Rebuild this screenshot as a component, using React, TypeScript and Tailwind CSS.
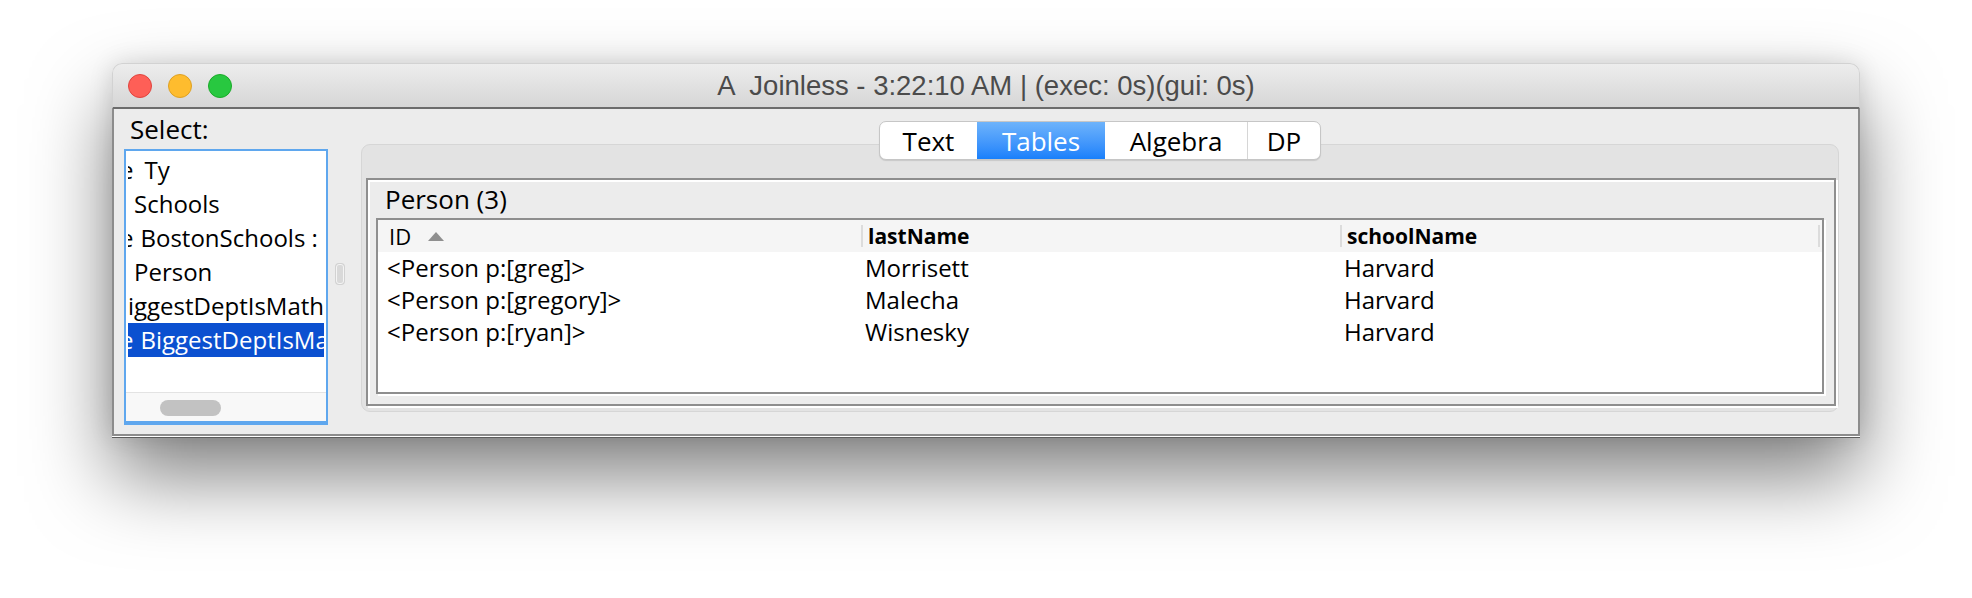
import React from 'react';

type ListRow = {
  text: string;
  prefix: boolean;
  textClass: string;
  selected?: boolean;
};

const listRows: ListRow[] = [
  { text: 'Ty', prefix: true, textClass: 'ml-[11px]' },
  { text: 'Schools', prefix: false, textClass: 'ml-[6px]' },
  { text: 'BostonSchools :', prefix: true, textClass: 'ml-[7px]' },
  { text: 'Person', prefix: false, textClass: 'ml-[6px]' },
  { text: 'iggestDeptIsMath', prefix: false, textClass: 'ml-0' },
  { text: 'BiggestDeptIsMath', prefix: true, textClass: 'ml-[7px]', selected: true },
];

const people = [
  { id: '<Person p:[greg]>', lastName: 'Morrisett', school: 'Harvard' },
  { id: '<Person p:[gregory]>', lastName: 'Malecha', school: 'Harvard' },
  { id: '<Person p:[ryan]>', lastName: 'Wisnesky', school: 'Harvard' },
];

const tabs = [
  { label: 'Text', width: 'w-[97px]' },
  { label: 'Tables', width: 'w-[128px]', active: true },
  { label: 'Algebra', width: 'w-[142px]' },
  { label: 'DP', width: 'w-[73px]' },
];

const TitleBar: React.FC = () => (
  <div className="grid h-[46px] grid-cols-[1fr_auto_1fr] items-center rounded-t-[10px] border-x border-t border-b-2 border-[#d2d2d2] border-b-[#6c6c6c] bg-gradient-to-b from-[#ededed] to-[#d6d6d6]">
    <div className="flex gap-[16px] pl-[15px]">
      <span className="h-[24px] w-[24px] rounded-full border border-[#e0443e] bg-[#fe5f57]" />
      <span className="h-[24px] w-[24px] rounded-full border border-[#dea123] bg-[#febc2e]" />
      <span className="h-[24px] w-[24px] rounded-full border border-[#1aab29] bg-[#28c840]" />
    </div>
    <div className="whitespace-pre font-['Liberation_Sans',Arial,sans-serif] text-[27.5px] leading-none text-[#4b4b4b]">
      A  Joinless - 3:22:10 AM | (exec: 0s)(gui: 0s)
    </div>
    <div />
  </div>
);

const SelectList: React.FC = () => (
  <div className="flex w-[214px] flex-col">
    <div className="flex h-[40px] items-center pl-[16px] text-[26px] leading-none text-black">Select:</div>
    <div className="ml-[10px] flex h-[276px] w-[204px] flex-col border-2 border-b-[4px] border-[#5fa7ee] bg-white">
      <div className="flex-1 overflow-hidden px-[2px] pt-[2px]">
        {listRows.map((row, i) => (
          <div
            key={i}
            className={`flex h-[34px] items-center overflow-hidden whitespace-nowrap text-[24px] leading-none ${
              row.selected ? 'bg-[#0b50d0] text-white' : 'text-black'
            }`}
          >
            {row.prefix && <span className="-ml-[8px]">e</span>}
            <span className={row.textClass}>{row.text}</span>
          </div>
        ))}
      </div>
      <div className="h-[29px] border-t border-[#e3e3e3] bg-[#f8f8f8] pl-[34px] pt-[7px]">
        <div className="h-[16px] w-[61px] rounded-full bg-[#c2c2c2]" />
      </div>
    </div>
  </div>
);

const SortArrow: React.FC = () => (
  <svg width="16" height="9" viewBox="0 0 16 9" className="ml-[17px]">
    <polygon points="8,0 16,9 0,9" fill="#8f8f8f" />
  </svg>
);

const PersonTable: React.FC = () => (
  <div className="flex flex-1 flex-col border-2 border-[#8e8e8e] bg-[#ececec] shadow-[inset_2px_2px_0_#fff,2px_2px_0_#fff]">
    <div className="flex h-[38px] items-center pl-[17px] text-[26px] leading-none text-black">Person (3)</div>
    <div className="mb-[10px] ml-[8px] mr-[10px] flex-1 border-2 border-[#8e8e8e] bg-white shadow-[2px_2px_0_#fff]">
      {/* header */}
      <div className="grid h-[32px] grid-cols-[483px_479px_480px] bg-[#f5f5f5] text-[21px] leading-none text-black">
        <div className="flex items-center pl-[11px] text-[22px]">
          <span>ID</span>
          <SortArrow />
        </div>
        <div className="flex items-center">
          <span className="h-[22px] w-[2px] bg-[#dcdcdc]" />
          <span className="pl-[5px] font-bold">lastName</span>
        </div>
        <div className="flex items-center">
          <span className="h-[22px] w-[2px] bg-[#dcdcdc]" />
          <span className="pl-[5px] font-bold">schoolName</span>
          <span className="ml-auto h-[22px] w-[2px] bg-[#dcdcdc]" />
        </div>
      </div>
      {people.map(p => (
        <div key={p.id} className="grid h-[32px] grid-cols-[483px_479px_480px] items-center text-[24px] leading-none text-black">
          <div className="whitespace-nowrap pl-[9px]">{p.id}</div>
          <div className="pl-[4px]">{p.lastName}</div>
          <div className="pl-[4px]">{p.school}</div>
        </div>
      ))}
    </div>
  </div>
);

const TabbedPane: React.FC = () => (
  <div className="flex w-[1478px] flex-col pt-[12px]">
    <div className="relative z-10 flex justify-center">
      <div className="flex h-[39px] overflow-hidden rounded-[7px] border border-[#c6c6c6] bg-white shadow-[0_1px_1px_rgba(0,0,0,0.12)]">
        {tabs.map((t, i) => (
          <div
            key={t.label}
            className={`flex items-center justify-center text-[26px] leading-none ${t.width} ${
              t.active
                ? 'bg-gradient-to-b from-[#6db3fb] to-[#1880fb] text-white'
                : 'text-black'
            } ${i > 0 && !t.active && !tabs[i - 1].active ? 'border-l border-[#d6d6d6]' : ''}`}
          >
            {t.label}
          </div>
        ))}
      </div>
    </div>
    <div className="-mt-[16px] flex h-[268px] rounded-[9px] border border-[#d6d6d6] bg-[#e3e3e3] pb-[5px] pl-[4px] pr-[2px] pt-[33px]">
      <PersonTable />
    </div>
  </div>
);

export default function App() {
  return (
    <div className="h-[598px] w-[1972px] overflow-hidden bg-white pl-[112px] pt-[63px] font-['Open_Sans','DejaVu_Sans',sans-serif]">
      <div className="w-[1748px] rounded-t-[10px] shadow-[0_40px_80px_rgba(0,0,0,0.5),0_0_24px_rgba(0,0,0,0.12)]">
        <TitleBar />
        <div className="flex h-[327px] border-x-2 border-b-2 border-[#8c8c8c] bg-[#ececec] shadow-[0_1px_0_#fff,0_2px_0_#5c5c5c]">
          <SelectList />
          {/* split divider */}
          <div className="flex w-[33px] items-center pl-[8px] pt-[4px]">
            <div className="h-[20px] w-[8px] rounded-[3px] border border-[#f4f4f4] bg-[#d9d9d9] shadow-[0_0_0_1px_#d2d2d2]" />
          </div>
          <TabbedPane />
        </div>
      </div>
    </div>
  );
}
